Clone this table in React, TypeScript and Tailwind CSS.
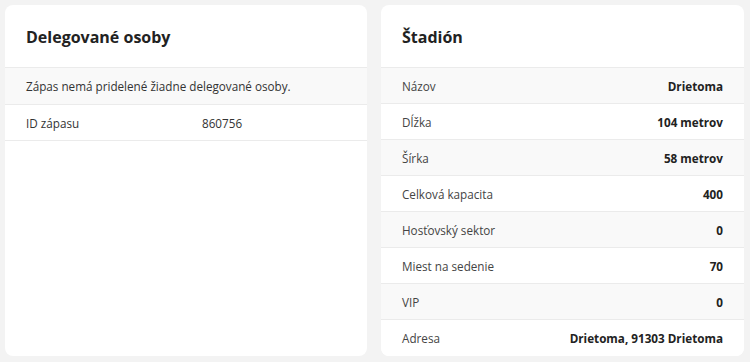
const stadium: [string, string][] = [
  ['Názov', 'Drietoma'],
  ['Dĺžka', '104 metrov'],
  ['Šírka', '58 metrov'],
  ['Celková kapacita', '400'],
  ['Hosťovský sektor', '0'],
  ['Miest na sedenie', '70'],
  ['VIP', '0'],
  ['Adresa', 'Drietoma, 91303 Drietoma'],
];

function CardHeader({ title }: { title: string }) {
  return (
    <div className="flex h-[63px] items-center border-b border-[#ebebeb] px-[21px] pt-px">
      <h2 className="text-[16px] font-bold text-[#222]">{title}</h2>
    </div>
  );
}

export default function App() {
  return (
    <div
      className="grid h-[362px] w-[750px] grid-cols-[362px_363px] gap-[14px] bg-[#f3f3f3] pl-[5px] pt-[5px] pb-[6px]"
      style={{ fontFamily: '"Open Sans", sans-serif' }}
    >
      {/* Delegates */}
      <section className="overflow-hidden rounded-lg bg-white">
        <CardHeader title="Delegované osoby" />
        <div className="flex h-[37px] items-center border-b border-[#ebebeb] bg-[#f9f9f9] px-[21px] pt-[2px] text-[11.7px] text-[#333]">
          Zápas nemá pridelené žiadne delegované osoby.
        </div>
        <div className="flex h-[36px] items-center border-b border-[#ebebeb] px-[21px] pt-[2px] text-[11.7px] text-[#333]">
          <span className="w-[176px]">ID zápasu</span>
          <span>860756</span>
        </div>
      </section>

      {/* Stadium */}
      <section className="overflow-hidden rounded-lg bg-white">
        <CardHeader title="Štadión" />
        {stadium.map(([label, value], i) => (
          <div
            key={label}
            className={`flex h-[36px] items-center justify-between px-[21px] pt-[2px] text-[11.7px] ${
              i < stadium.length - 1 ? 'border-b border-[#ebebeb]' : ''
            } ${i % 2 === 0 ? 'bg-[#f9f9f9]' : 'bg-white'}`}
          >
            <span className="text-[#444]">{label}</span>
            <span className="font-bold text-[#222]">{value}</span>
          </div>
        ))}
      </section>
    </div>
  );
}
